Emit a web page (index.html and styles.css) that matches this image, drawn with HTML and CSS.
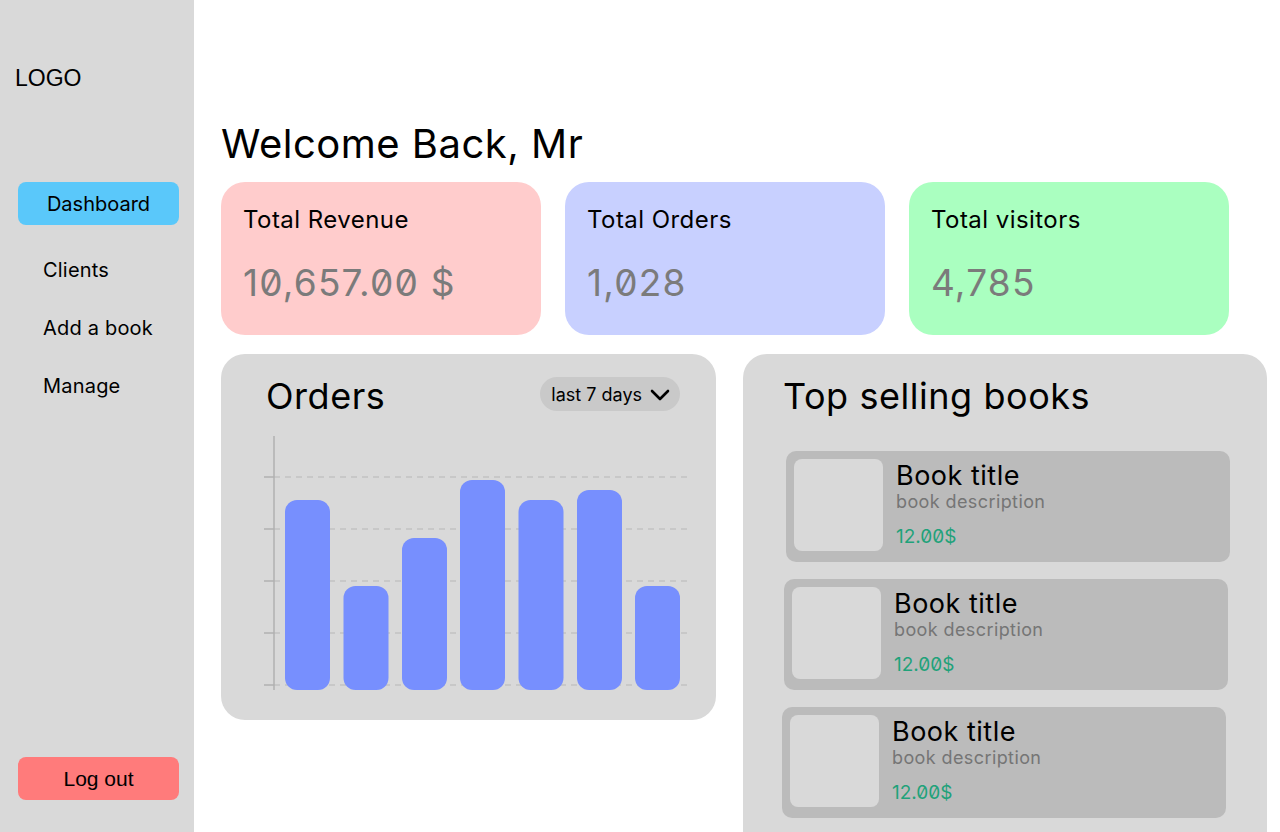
FILE: index.html
```html
<!DOCTYPE html>
<html lang="en">
<head>
<meta charset="utf-8">
<title>Dashboard</title>
<link rel="stylesheet" href="styles.css">
</head>
<body>
<div class="app">
  <aside class="sidebar">
    <div class="logo">LOGO</div>
    <nav class="nav">
      <a class="nav-item active">Dashboard</a>
      <a class="nav-item">Clients</a>
      <a class="nav-item">Add a book</a>
      <a class="nav-item">Manage</a>
    </nav>
    <button class="logout">Log out</button>
  </aside>
  <main class="main">
    <h1 class="welcome">Welcome Back, Mr</h1>
    <section class="stats">
      <div class="stat stat-red">
        <div class="stat-label">Total Revenue</div>
        <div class="stat-value">10,657.00 $</div>
      </div>
      <div class="stat stat-blue">
        <div class="stat-label">Total Orders</div>
        <div class="stat-value">1,028</div>
      </div>
      <div class="stat stat-green">
        <div class="stat-label">Total visitors</div>
        <div class="stat-value">4,785</div>
      </div>
    </section>
    <section class="lower">
      <div class="panel orders">
        <div class="panel-head">
          <h2 class="panel-title">Orders</h2>
          <div class="dropdown">
            <span>last 7 days</span>
            <svg width="20" height="12" viewBox="0 0 20 12"><path d="M2 2 L10 10 L18 2" fill="none" stroke="#000" stroke-width="2.6" stroke-linecap="round" stroke-linejoin="round"/></svg>
          </div>
        </div>
        <svg class="chart" width="430" height="262" viewBox="0 0 430 262">
          <g stroke="#c2c2c2" stroke-width="1.5" stroke-dasharray="6 5">
            <line x1="14" y1="45" x2="428" y2="45"/>
            <line x1="14" y1="97" x2="428" y2="97"/>
            <line x1="14" y1="149" x2="428" y2="149"/>
            <line x1="14" y1="201" x2="428" y2="201"/>
            <line x1="14" y1="253" x2="428" y2="253"/>
          </g>
          <g stroke="#b0b0b0" stroke-width="1.5">
            <line x1="4" y1="45" x2="14" y2="45"/>
            <line x1="4" y1="97" x2="14" y2="97"/>
            <line x1="4" y1="149" x2="14" y2="149"/>
            <line x1="4" y1="201" x2="14" y2="201"/>
            <line x1="4" y1="253" x2="14" y2="253"/>
            <line x1="14" y1="4" x2="14" y2="258"/>
          </g>
          <g fill="#778ffe">
            <rect x="25" y="68" width="45" height="190" rx="12"/>
            <rect x="83.5" y="154" width="45" height="104" rx="12"/>
            <rect x="142" y="106" width="45" height="152" rx="12"/>
            <rect x="200" y="48" width="45" height="210" rx="12"/>
            <rect x="258.5" y="68" width="45" height="190" rx="12"/>
            <rect x="317" y="58" width="45" height="200" rx="12"/>
            <rect x="375" y="154" width="45" height="104" rx="12"/>
          </g>
        </svg>
      </div>
      <div class="panel top-books">
        <div class="panel-head">
          <h2 class="panel-title">Top selling books</h2>
        </div>
        <div class="book-list">
          <div class="book">
            <div class="thumb"></div>
            <div class="book-info">
              <div class="book-title">Book title</div>
              <div class="book-desc">book description</div>
              <div class="book-price">12.00$</div>
            </div>
          </div>
          <div class="book">
            <div class="thumb"></div>
            <div class="book-info">
              <div class="book-title">Book title</div>
              <div class="book-desc">book description</div>
              <div class="book-price">12.00$</div>
            </div>
          </div>
          <div class="book">
            <div class="thumb"></div>
            <div class="book-info">
              <div class="book-title">Book title</div>
              <div class="book-desc">book description</div>
              <div class="book-price">12.00$</div>
            </div>
          </div>
        </div>
      </div>
    </section>
  </main>
</div>
</body>
</html>
```
FILE: styles.css
```css
* { box-sizing: border-box; }
html, body { margin: 0; padding: 0; }
body {
  width: 1280px;
  height: 832px;
  overflow: hidden;
  background: #ffffff;
  font-family: Inter, "Noto Sans", sans-serif;
  color: #000;
}
.app {
  display: flex;
  height: 832px;
}
.sidebar {
  width: 194px;
  flex: none;
  background: #d9d9d9;
  display: flex;
  flex-direction: column;
  padding: 65px 15px 32px 15px;
}
.logo {
  font-family: "Liberation Sans", Arial, sans-serif;
  font-size: 23px;
  line-height: 26px;
}
.nav {
  margin: 91px 0 0 3px;
  display: flex;
  flex-direction: column;
  gap: 15px;
}
.nav-item {
  display: flex;
  align-items: center;
  height: 43px;
  width: 161px;
  padding-left: 25px;
  font-size: 20px;
  letter-spacing: 0.2px;
  color: #000;
  border-radius: 8px;
}
.nav-item.active {
  background: #5ac8fa;
  justify-content: center;
  padding-left: 0;
  margin-bottom: 8px;
  letter-spacing: 0;
}
.logout {
  margin: auto 0 0 3px;
  width: 161px;
  height: 43px;
  border: none;
  border-radius: 8px;
  background: #ff7b7b;
  font-family: "Liberation Sans", Arial, sans-serif;
  font-size: 21px;
  color: #000;
  padding: 0;
}
.main {
  flex: 1;
  min-width: 0;
  padding: 120px 0 0 27px;
}
.welcome {
  margin: 0 0 14px;
  font-size: 40px;
  font-weight: 400;
  line-height: 48px;
  letter-spacing: 0.5px;
}
.stats {
  display: flex;
  gap: 24px;
}
.stat {
  width: 320px;
  height: 153px;
  border-radius: 24px;
  padding: 24px 23px 24px 22px;
}
.stat-red { background: #ffcccc; }
.stat-blue { background: #c8d0ff; }
.stat-green { background: #aaffc0; }
.stat-label {
  font-size: 24px;
  line-height: 28px;
  letter-spacing: 0.45px;
}
.stat-value {
  margin-top: 26px;
  font-size: 37px;
  line-height: 45px;
  letter-spacing: 1.2px;
  color: #7b7b7b;
  font-feature-settings: "zero" 1;
}
.lower {
  display: flex;
  gap: 27px;
  margin-top: 19px;
  align-items: flex-start;
}
.panel {
  background: #d9d9d9;
  border-radius: 24px;
  flex: none;
}
.orders {
  width: 495px;
  height: 366px;
  padding: 18px 36px 0 45px;
}
.top-books {
  width: 524px;
  height: 520px;
  padding: 18px 0 0 41px;
}
.top-books .panel-title { margin-left: -1px; }
.panel-head {
  display: flex;
  align-items: center;
  justify-content: space-between;
  height: 44px;
}
.panel-title {
  margin: 4px 0 0;
  font-size: 36px;
  font-weight: 400;
  line-height: 44px;
  letter-spacing: 0.55px;
}
.dropdown {
  display: flex;
  align-items: center;
  gap: 8px;
  height: 34px;
  padding: 0 10px 0 11px;
  background: #c9c9c9;
  border-radius: 17px;
  font-size: 18px;
}
.dropdown svg { margin-top: 2px; }
.chart {
  display: block;
  margin: 16px 0 0 -6px;
}
.book-list {
  margin-top: 35px;
  display: flex;
  flex-direction: column;
  gap: 17px;
}
.book {
  width: 444px;
  height: 111px;
  background: #bbbbbb;
  border-radius: 10px;
  padding: 8px;
  display: flex;
  gap: 13px;
  margin-left: 2px;
}
.book:nth-child(2) { margin-left: 0; }
.book:nth-child(3) { margin-left: -2px; }
.thumb {
  width: 89px;
  height: 92px;
  flex: none;
  background: #d9d9d9;
  border-radius: 8px;
}
.book-info {
  display: flex;
  flex-direction: column;
}
.book-title {
  font-size: 27px;
  line-height: 31px;
  letter-spacing: 0.5px;
  margin-top: 1px;
}
.book-desc {
  font-size: 18px;
  line-height: 22px;
  letter-spacing: 0.4px;
  color: #757575;
}
.book-price {
  margin-top: 12px;
  font-size: 19px;
  line-height: 23px;
  color: #1fa27a;
  font-feature-settings: "zero" 1;
}
```
